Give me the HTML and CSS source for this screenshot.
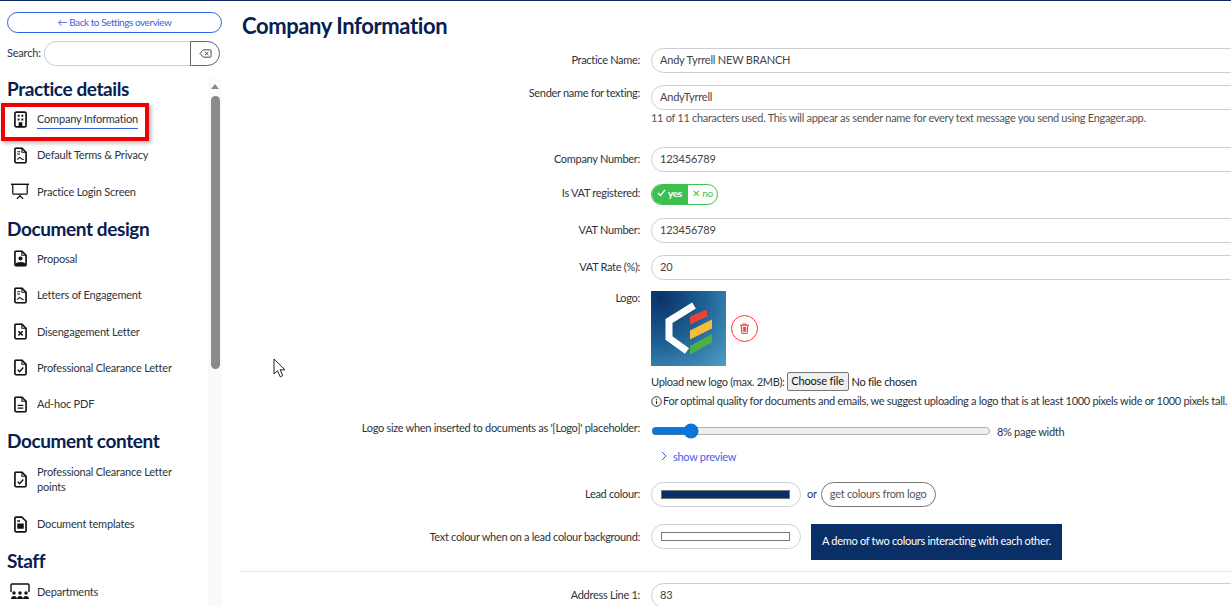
FILE: index.html
```html
<!DOCTYPE html>
<html lang="en">
<head>
<meta charset="utf-8">
<title>Company Information</title>
<link rel="stylesheet" href="styles.css">
</head>
<body>
<svg class="defs" width="0" height="0" aria-hidden="true">
  <symbol id="doc" viewBox="0 0 14 18"><path d="M2 1h6.500L13 5.500V15.500a1.500 1.500 0 0 1-1.500 1.500h-9A1.500 1.500 0 0 1 1 15.500V2a1 1 0 0 1 1-1z" fill="none" stroke="#111" stroke-width="1.800"/><path d="M8.500 1v4.500H13" fill="none" stroke="#111" stroke-width="1.200"/></symbol>
</svg>
<div class="app">
  <aside class="sidebar">
    <a class="back" href="#">← Back to Settings overview</a>
    <div class="search">
      <label class="search-label">Search:</label>
      <div class="search-group">
        <input class="search-input" type="text">
        <button class="search-clear" type="button" aria-label="Clear">
          <svg width="13" height="9" viewBox="0 0 15 11"><path d="M5 1h8.500a.8.8 0 0 1 .8.8v7.400a.8.8 0 0 1-.8.8H5L.8 5.500z" fill="none" stroke="#444" stroke-width="1.200"/><path d="M7 3.500l4 4M11 3.500l-4 4" stroke="#444" stroke-width="1.200"/></svg>
        </button>
      </div>
    </div>
    <h2 class="group first">Practice details</h2>
    <ul class="menu">
      <li class="item active">
        <svg class="ico" viewBox="0 0 14 18"><rect x="1" y="1" width="12" height="16" rx="1.500" fill="none" stroke="#111" stroke-width="1.800"/><path d="M4 4h2v2H4zM8 4h2v2H8zM4 8h2v2H4zM8 8h2v2H8zM5 12h4v5H5z" fill="#111"/></svg>
        <span class="link">Company Information</span>
      </li>
      <li class="item">
        <svg class="ico" viewBox="0 0 14 18"><use href="#doc"/><path d="M3.500 5h3M3.500 7.500h3M3.500 13.500l2.500-2.500 2 1.500 2.500 1" fill="none" stroke="#111" stroke-width="1.100"/></svg>
        <span class="link">Default Terms &amp; Privacy</span>
      </li>
      <li class="item">
        <svg class="ico wide" viewBox="0 0 20 18"><path d="M0 1h20" stroke="#111" stroke-width="1.600"/><path d="M2 1v10a1 1 0 0 0 1 1h14a1 1 0 0 0 1-1V1" fill="none" stroke="#111" stroke-width="1.400"/><path d="M10 12v3M6.500 17l3.500-3 3.500 3" fill="none" stroke="#111" stroke-width="1.400"/></svg>
        <span class="link">Practice Login Screen</span>
      </li>
    </ul>
    <h2 class="group">Document design</h2>
    <ul class="menu">
      <li class="item">
        <svg class="ico" viewBox="0 0 14 18"><use href="#doc"/><circle cx="7" cy="9" r="2.200" fill="#111"/><path d="M1.500 16.500v-1c1-3.500 10-3.500 11 0v1z" fill="#111"/></svg>
        <span class="link">Proposal</span>
      </li>
      <li class="item">
        <svg class="ico" viewBox="0 0 14 18"><use href="#doc"/><path d="M3.500 5h3M3.500 7.500h3M3.500 13.500l2.500-2.500 2 1.500 2.500 1" fill="none" stroke="#111" stroke-width="1.100"/></svg>
        <span class="link">Letters of Engagement</span>
      </li>
      <li class="item">
        <svg class="ico" viewBox="0 0 14 18"><use href="#doc"/><path d="M4.700 8.700l4.600 4.600M9.300 8.700l-4.600 4.600" stroke="#111" stroke-width="1.700"/></svg>
        <span class="link">Disengagement Letter</span>
      </li>
      <li class="item">
        <svg class="ico" viewBox="0 0 14 18"><use href="#doc"/><path d="M4 11.500l2 2 4-4.500" fill="none" stroke="#111" stroke-width="1.500"/></svg>
        <span class="link">Professional Clearance Letter</span>
      </li>
      <li class="item">
        <svg class="ico" viewBox="0 0 14 18"><use href="#doc"/><path d="M4 10h6M4 13h6" stroke="#111" stroke-width="1.400"/></svg>
        <span class="link">Ad-hoc PDF</span>
      </li>
    </ul>
    <h2 class="group">Document content</h2>
    <ul class="menu menu-content">
      <li class="item double">
        <svg class="ico" viewBox="0 0 14 18"><use href="#doc"/><path d="M4 11.500l2 2 4-4.500" fill="none" stroke="#111" stroke-width="1.500"/></svg>
        <span class="link">Professional Clearance Letter points</span>
      </li>
      <li class="item">
        <svg class="ico" viewBox="0 0 14 18"><path d="M2 1h6.500L13 5.500V15.500a1.500 1.500 0 0 1-1.500 1.500h-9A1.500 1.500 0 0 1 1 15.500V2a1 1 0 0 1 1-1z" fill="none" stroke="#111" stroke-width="1.800"/><path d="M3.500 4.500h3v1.500h-3zM3.500 8h7v5.500h-7z" fill="#111"/></svg>
        <span class="link">Document templates</span>
      </li>
    </ul>
    <h2 class="group">Staff</h2>
    <ul class="menu">
      <li class="item">
        <svg class="ico dept" viewBox="0 0 20 17"><path d="M1 9V2a1 1 0 0 1 1-1h16a1 1 0 0 1 1 1v7" fill="none" stroke="#111" stroke-width="1.400"/><circle cx="4" cy="10" r="1.700" fill="#111"/><circle cx="10" cy="10" r="1.700" fill="#111"/><circle cx="16" cy="10" r="1.700" fill="#111"/><path d="M1 16c0-4 6-4 6 0zM7 16c0-4 6-4 6 0zM13 16c0-4 6-4 6 0z" fill="#111"/></svg>
        <span class="link">Departments</span>
      </li>
    </ul>
    <div class="scroll-track">
      <span class="scroll-up"></span>
      <span class="scroll-thumb"></span>
    </div>
  </aside>
  <main class="main">
    <h1 class="title">Company Information</h1>
    <form class="form">
      <div class="row r-name">
        <label class="lbl">Practice Name:</label>
        <input class="txt" type="text" value="Andy Tyrrell NEW BRANCH">
      </div>
      <div class="row r-sender">
        <label class="lbl lbl-top">Sender name for texting:</label>
        <div>
          <input class="txt" type="text" value="AndyTyrrell">
          <p class="help">11 of 11 characters used. This will appear as sender name for every text message you send using Engager.app.</p>
        </div>
      </div>
      <div class="row r-company">
        <label class="lbl">Company Number:</label>
        <input class="txt" type="text" value="123456789">
      </div>
      <div class="row r-vatreg">
        <label class="lbl lbl-vatreg">Is VAT registered:</label>
        <div class="toggle">
          <span class="tog-yes"><svg width="9" height="8" viewBox="0 0 9 8"><path d="M1 4l2.500 2.500L8 1" fill="none" stroke="#fff" stroke-width="1.200"/></svg> yes</span>
          <span class="tog-no">✕ no</span>
        </div>
      </div>
      <div class="row r-vat">
        <label class="lbl">VAT Number:</label>
        <input class="txt" type="text" value="123456789">
      </div>
      <div class="row r-rate">
        <label class="lbl">VAT Rate (%):</label>
        <input class="txt" type="text" value="20">
      </div>
      <div class="row r-logo">
        <label class="lbl lbl-logo">Logo:</label>
        <div>
          <div class="logo-line">
            <svg class="logo" width="75" height="75" viewBox="0 0 75 75">
              <defs><radialGradient id="lg" cx="0.12" cy="0.1" r="1.250"><stop offset="0" stop-color="#0b3268"/><stop offset="0.5" stop-color="#1f6396"/><stop offset="1" stop-color="#4d9fc6"/></radialGradient></defs>
              <rect width="75" height="75" fill="url(#lg)"/>
              <polyline points="43,14.500 18,30 18,47 36,60" fill="none" stroke="#fff" stroke-width="7"/>
              <path d="M39 25.500l17-7v7l-17 8z" fill="#e8443a"/>
              <path d="M39 39.500l22-11v9l-22 11z" fill="#f6bd38"/>
              <path d="M39 55l22-12v8.500l-22 12z" fill="#4caf4a"/>
            </svg>
            <button class="trash" type="button" aria-label="Delete logo">
              <svg width="9" height="11" viewBox="0 0 11 13"><path d="M0 2.500h11M3.500 2.500V1h4v1.500M1.500 2.500l.7 10h6.600l.7-10M4 4.500v6M5.500 4.500v6M7 4.500v6" fill="none" stroke="#f33" stroke-width="1.200"/></svg>
            </button>
          </div>
          <div class="upload"><span>Upload new logo (max. 2MB):</span><button class="file-btn" type="button">Choose file</button><span class="file-name">No file chosen</span></div>
          <p class="note"><svg width="11" height="11" viewBox="0 0 12 12"><circle cx="6" cy="6" r="5.200" fill="none" stroke="#222" stroke-width="1"/><path d="M6 5.200v3.500M6 3v1.200" stroke="#222" stroke-width="1.200"/></svg>For optimal quality for documents and emails, we suggest uploading a logo that is at least 1000 pixels wide or 1000 pixels tall.</p>
        </div>
      </div>
      <div class="row r-size">
        <label class="lbl lbl-size">Logo size when inserted to documents as '[Logo]' placeholder:</label>
        <div class="slider-line"><input class="range" type="range" min="0" max="100" value="10"><span>8% page width</span></div>
      </div>
      <div class="row r-preview">
        <span></span>
        <a class="preview" href="#"><svg width="6" height="10" viewBox="0 0 6 10"><path d="M1 1l4 4-4 4" fill="none" stroke="#2356e8" stroke-width="1"/></svg>show preview</a>
      </div>
      <div class="row r-lead">
        <label class="lbl">Lead colour:</label>
        <div class="colour-line">
          <div class="well"><span class="swatch navy"></span></div>
          <span class="or">or</span>
          <button class="pill" type="button">get colours from logo</button>
        </div>
      </div>
      <div class="row r-text">
        <label class="lbl lbl-text">Text colour when on a lead colour background:</label>
        <div class="colour-line top">
          <div class="well"><span class="swatch white"></span></div>
          <div class="demo">A demo of two colours interacting with each other.</div>
        </div>
      </div>
      <hr class="rule">
      <div class="row">
        <label class="lbl">Address Line 1:</label>
        <input class="txt" type="text" value="83">
      </div>
    </form>
  </main>
</div>
<div class="highlight"></div>
<svg class="cursor" width="14" height="20" viewBox="0 0 14 20"><path d="M1 1v15l3.500-3.200 2.700 6 2.600-1.200-2.700-5.800H12z" fill="#fff" stroke="#222" stroke-width="1"/></svg>
</body>
</html>
```

FILE: styles.css
```css
* { box-sizing: border-box; }
html, body { margin: 0; height: 606px; overflow: hidden; background: #fff; }
body { font-family: Lato, "Liberation Sans", sans-serif; font-size: 11px; color: #2c3440; position: relative; }
.defs { position: absolute; }
.app { display: flex; height: 606px; border-top: 1px solid #0b2a5b; overflow: hidden; }

.sidebar { width: 241px; flex: none; padding: 11px 0 0 7px; position: relative; overflow: hidden; letter-spacing: -.2px; }
.back { display: block; width: 215px; height: 21px; line-height: 18px; text-align: center; border: 1px solid #2f62e8; border-radius: 11px; color: #3a62e0; text-decoration: none; font-size: 10px; letter-spacing: -.45px; }
.search { display: flex; align-items: center; margin-top: 8px; height: 25px; }
.search-label { width: 37px; flex: none; padding-bottom: 2px; }
.search-group { display: flex; width: 176px; height: 25px; }
.search-input { width: 146px; height: 25px; border: 1px solid #ccd0d6; border-right: 0; border-radius: 13px 0 0 13px; outline: 0; background: #fff; }
.search-clear { width: 30px; height: 25px; padding: 0; border: 1px solid #666; border-radius: 0 13px 13px 0; background: #fff; display: flex; align-items: center; justify-content: center; }

.group { margin: 0; font-size: 19px; line-height: 24px; font-weight: 700; color: #08204f; letter-spacing: -.4px; }
.first { margin-top: 11px; }
.menu { list-style: none; margin: 0 0 6.900px; padding: 0; }
.menu-content { margin-bottom: 7px; }
.item { display: flex; align-items: center; height: 36.300px; padding-left: 7px; }
.item .ico { flex: none; width: 13px; height: 17px; margin-right: 10px; }
.item .ico.wide { width: 18px; height: 17px; margin-left: -3px; margin-right: 8px; }
.item .ico.dept { width: 20px; height: 17px; margin-left: -4px; margin-right: 7px; }
.item.double { height: 52px; margin-bottom: 1px; padding-top: 1px; padding-right: 50px; line-height: 15px; }
.link { display: block; padding-bottom: 1px; }
.active .link { border-bottom: 1px solid #3a62e0; padding-bottom: 3px; margin-top: 3px; }

.scroll-track { position: absolute; left: 208px; top: 78px; width: 14px; bottom: 0; background: #fafafa; }
.scroll-up { position: absolute; left: 3px; top: 5px; border: 4px solid transparent; border-top: 0; border-bottom: 5px solid #8a8a8a; }
.scroll-thumb { position: absolute; left: 3px; top: 17px; width: 9px; height: 273px; border-radius: 5px; background: #8b8b8b; }

.main { flex: 1; min-width: 0; overflow: hidden; letter-spacing: -.3px; }
.title { margin: 11px 0 9px 1px; font-size: 22px; line-height: 27px; font-weight: 700; color: #08204f; letter-spacing: -.4px; }
.form { width: 1100px; }
.row { display: grid; grid-template-columns: 399px 1fr; column-gap: 11px; align-items: center; margin-bottom: 12px; }
.lbl { text-align: right; padding-bottom: 2px; }
.lbl-top { align-self: start; padding-top: 1px; }
.lbl-logo { align-self: start; padding-top: 0; }
.lbl-vatreg { padding-bottom: 4px; }
.lbl-size { align-self: start; margin-top: -2px; }
.lbl-text { align-self: start; padding-top: 6px; }
.txt { display: block; width: 700px; height: 25px; padding: 0 8px 2px; border: 1px solid #ccd0d6; border-radius: 13px; font: inherit; letter-spacing: -.2px; color: #444; outline: 0; background: #fff; }
.help { margin: 1px 0 0; line-height: 14px; color: #555; }
.r-sender { margin-bottom: 22px; }
.toggle { display: flex; width: 67px; height: 21px; border: 1px solid #3cc04f; border-radius: 11px; overflow: hidden; font-size: 10px; line-height: 17px; }
.tog-yes { width: 36px; background: #3cc04f; color: #fff; padding-left: 5px; white-space: nowrap; font-weight: 700; }
.tog-no { flex: 1; color: #3cc04f; text-align: center; white-space: nowrap; }
.r-vatreg { margin-bottom: 13px; }
.r-rate { margin-bottom: 11px; }
.logo-line { display: flex; align-items: center; height: 75px; }
.logo { display: block; }
.trash { width: 27px; height: 27px; margin: 0 0 0 5px; padding: 0; border: 1px solid #f33; border-radius: 50%; background: #fff; display: flex; align-items: center; justify-content: center; }
.upload { display: flex; align-items: center; margin-top: 5px; height: 20px; gap: 2px; white-space: nowrap; }
.file-btn { width: 62px; height: 19px; padding: 0 0 2px; font: inherit; letter-spacing: -.15px; color: #111; background: #efefef; border: 1px solid #767676; border-radius: 2px; }
.file-name { margin-left: 1px; color: #222; }
.note { margin: 2px 0 0; line-height: 15px; white-space: nowrap; }
.note svg { vertical-align: -2px; margin-right: 1px; }
.r-logo { margin-bottom: 15px; }
.slider-line { display: flex; align-items: center; gap: 6px; }
.range { width: 340px; margin: 0; height: 16px; accent-color: #0b74d8; }
.r-size { margin-bottom: 9px; }
.preview { display: flex; align-items: center; gap: 6px; padding-left: 10px; color: #4a5ee8; text-decoration: none; height: 16px; }
.r-preview { margin-bottom: 17px; }
.colour-line { display: flex; align-items: center; }
.colour-line.top { align-items: flex-start; }
.well { width: 150px; height: 25px; border: 1px solid #ccd0d6; border-radius: 13px; display: flex; align-items: center; padding-left: 9px; flex: none; }
.swatch { display: block; width: 129px; height: 9px; border: 1px solid #777; }
.navy { background: #0a2f66; }
.white { background: #fff; }
.or { margin: 0 4px 0 6px; padding-bottom: 2px; }
.pill { height: 25px; width: 115px; margin-top: 1px; padding: 0 0 2px; border: 1px solid #777; border-radius: 13px; background: #fff; font: inherit; letter-spacing: -.28px; color: #555; }
.demo { margin-left: 10px; width: 251px; height: 36px; line-height: 33px; text-align: center; background: #0a2f66; color: #fff; white-space: nowrap; }
.r-lead { margin-bottom: 17px; }
.r-text { margin-bottom: 11px; }
.rule { margin: 0 0 11px; border: 0; border-top: 1px solid #e2e4e8; }

.highlight { position: absolute; left: 1px; top: 103px; width: 148px; height: 38px; border: 4px solid #f00000; box-shadow: 2px 2px 4px rgba(0,0,0,.3); }
.cursor { position: absolute; left: 273px; top: 358px; }
```
